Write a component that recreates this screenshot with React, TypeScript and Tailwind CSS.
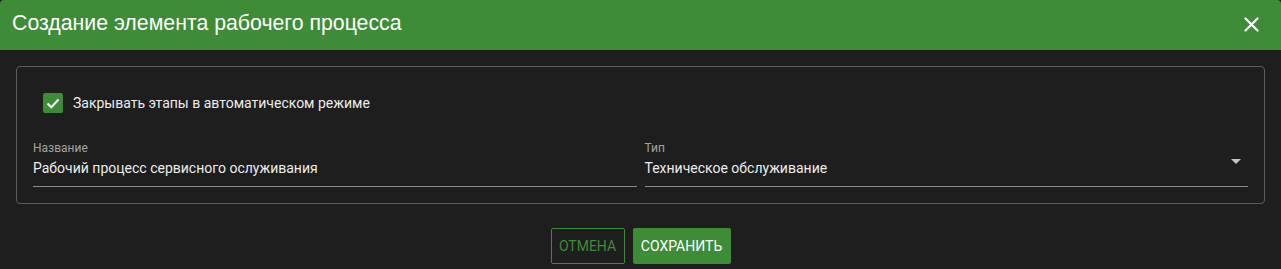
import { useState } from "react";

function Field({ label, value, select }: { label: string; value: string; select?: boolean }) {
  return (
    <div className="flex-1 flex flex-col border-b border-[#8a8a8a] pb-[8px]">
      <span className="text-[12px] leading-4 text-[#a3a3a3]">{label}</span>
      <div className="flex items-center justify-between h-5 mt-[2px]">
        <span className="text-[14px] text-[#ececec]">{value}</span>
        {select && (
          <svg width="10" height="5" viewBox="0 0 10 5" className="mr-[7px] -mt-[14px]">
            <path d="M0 0h10L5 5z" fill="#c4c4c4" />
          </svg>
        )}
      </div>
    </div>
  );
}

export default function App() {
  const [checked, setChecked] = useState(true);
  return (
    <div className="w-[1281px] h-[269px] bg-[#1e1e1e] font-['Roboto',sans-serif] overflow-hidden">
      <div className="h-[50px] bg-[#3e8b38] rounded-t-[4px] flex items-center justify-between pl-3 pr-[22px]">
        <h1 className="text-[21.3px] text-white font-['Liberation_Sans',sans-serif] -mt-[2px]">
          Создание элемента рабочего процесса
        </h1>
        <svg width="15" height="15" viewBox="0 0 15 15" className="-mt-[2px]">
          <path d="M1.5 1.5l12 12M13.5 1.5l-12 12" stroke="white" strokeWidth="2.2" strokeLinecap="round" />
        </svg>
      </div>
      <div className="px-4 pt-4">
        <div className="border border-[#5c5c5c] rounded-[4px] px-4 pt-4 pb-4">
          <label className="flex items-center h-10 pl-[10px] gap-[10px] cursor-pointer">
            <button
              onClick={() => setChecked(!checked)}
              className="w-[20px] h-[20px] rounded-[2px] bg-[#3e8b38] flex items-center justify-center"
            >
              {checked && (
                <svg width="14" height="11" viewBox="0 0 14 11">
                  <path d="M1.5 5.5l3.8 3.8L12.5 1.5" stroke="white" strokeWidth="2" fill="none" />
                </svg>
              )}
            </button>
            <span className="text-[14px] text-[#ececec]">Закрывать этапы в автоматическом режиме</span>
          </label>
          <div className="flex gap-2 mt-[17px]">
            <Field label="Название" value="Рабочий процесс сервисного ослуживания" />
            <Field label="Тип" value="Техническое обслуживание" select />
          </div>
        </div>
        <div className="flex justify-center gap-2 mt-[24px]">
          <button className="h-9 w-[74px] border border-[#3e8b38] rounded-[2px] text-[#3e8b38] text-[14px] uppercase">
            Отмена
          </button>
          <button className="h-9 w-[98px] bg-[#3e8b38] rounded-[2px] text-white text-[14px] uppercase">
            Сохранить
          </button>
        </div>
      </div>
    </div>
  );
}
